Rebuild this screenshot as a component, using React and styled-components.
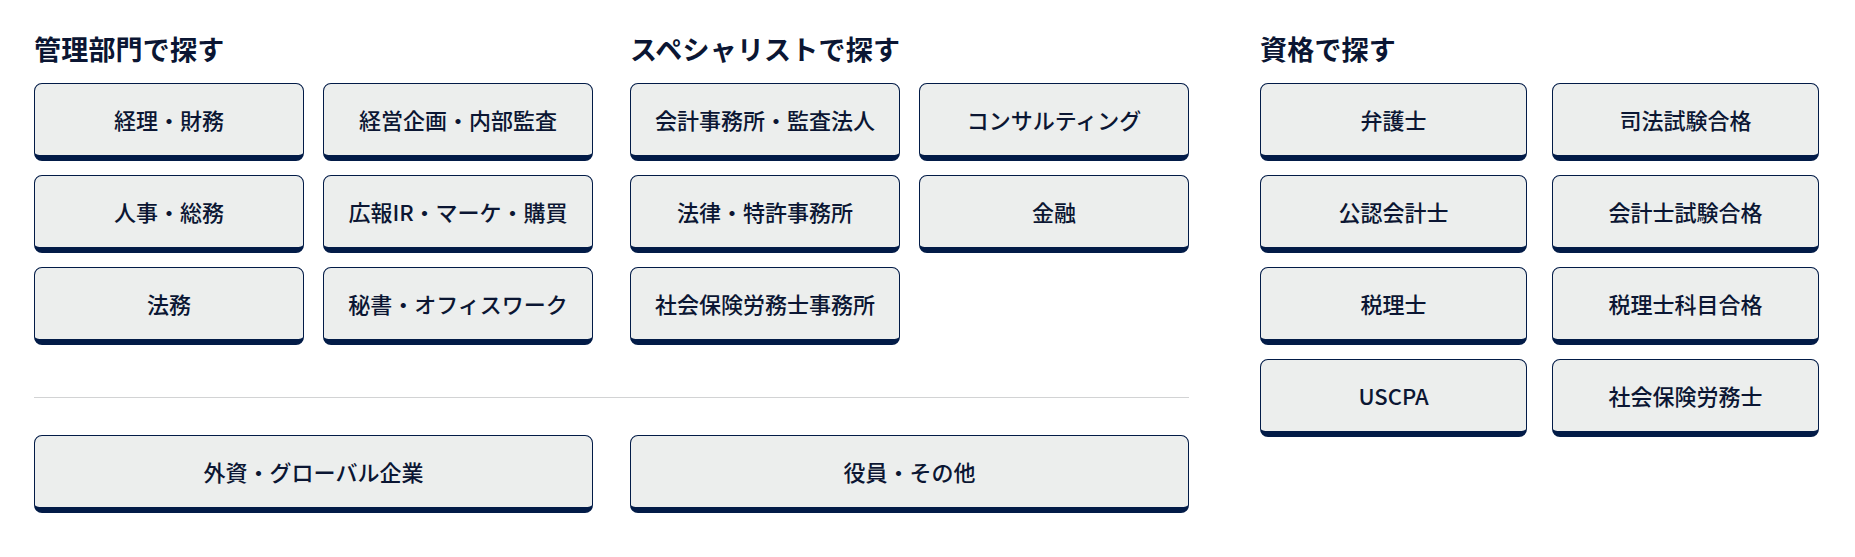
import React from "react";
import styled, { createGlobalStyle } from "styled-components";

const GlobalStyle = createGlobalStyle`
  html, body {
    margin: 0;
    padding: 0;
    background: #ffffff;
  }
  body {
    font-family: "Noto Sans CJK JP", "Noto Sans", sans-serif;
    color: #0b1633;
  }
  * { box-sizing: border-box; }
`;

const Page = styled.div`
  display: flex;
  align-items: flex-start;
  gap: 71px;
  padding: 35px 36px 40px 34px;
  width: 1855px;
`;

const LeftArea = styled.div`
  width: 1155px;
  flex: none;
  display: flex;
  flex-direction: column;
`;

const RightArea = styled.div`
  width: 559px;
  flex: none;
`;

const TwoCols = styled.div`
  display: grid;
  grid-template-columns: 559px 559px;
  column-gap: 37px;
  align-items: start;
`;

const Section = styled.section`
  display: flex;
  flex-direction: column;
`;

const Heading = styled.h2`
  margin: 0 0 21px;
  font-size: 27px;
  line-height: 27px;
  font-weight: 700;
  color: #0b1633;
  letter-spacing: 0.2px;
`;

const ButtonGrid = styled.div`
  display: grid;
  grid-template-columns: 1fr 1fr;
  column-gap: ${(p) => p.$colGap}px;
  row-gap: 14px;
`;

const Divider = styled.hr`
  margin: 52px 0 37px;
  border: none;
  border-top: 1px solid #d2d3d4;
  height: 0;
`;

const Tile = styled.a`
  display: flex;
  align-items: center;
  justify-content: center;
  height: 78px;
  padding-bottom: 2px;
  background: #eceeed;
  border: 1px solid #021b47;
  border-bottom-width: 6px;
  border-radius: 8px;
  color: #0b1633;
  font-size: 22px;
  line-height: 1;
  font-weight: 500;
  text-decoration: none;
  white-space: nowrap;
  cursor: pointer;
`;

const management = [
  "経理・財務",
  "経営企画・内部監査",
  "人事・総務",
  "広報IR・マーケ・購買",
  "法務",
  "秘書・オフィスワーク",
];

const specialist = [
  "会計事務所・監査法人",
  "コンサルティング",
  "法律・特許事務所",
  "金融",
  "社会保険労務士事務所",
];

const qualifications = [
  "弁護士",
  "司法試験合格",
  "公認会計士",
  "会計士試験合格",
  "税理士",
  "税理士科目合格",
  "USCPA",
  "社会保険労務士",
];

const bottom = ["外資・グローバル企業", "役員・その他"];

function TileGroup({ title, items, colGap }) {
  return (
    <Section>
      <Heading>{title}</Heading>
      <ButtonGrid $colGap={colGap}>
        {items.map((t) => (
          <Tile key={t}>{t}</Tile>
        ))}
      </ButtonGrid>
    </Section>
  );
}

export default function App() {
  return (
    <>
      <GlobalStyle />
      <Page>
        <LeftArea>
          <TwoCols>
            <TileGroup title="管理部門で探す" items={management} colGap={19} />
            <TileGroup title="スペシャリストで探す" items={specialist} colGap={19} />
          </TwoCols>
          <Divider />
          <TwoCols>
            {bottom.map((t) => (
              <Tile key={t}>{t}</Tile>
            ))}
          </TwoCols>
        </LeftArea>
        <RightArea>
          <TileGroup title="資格で探す" items={qualifications} colGap={25} />
        </RightArea>
      </Page>
    </>
  );
}
